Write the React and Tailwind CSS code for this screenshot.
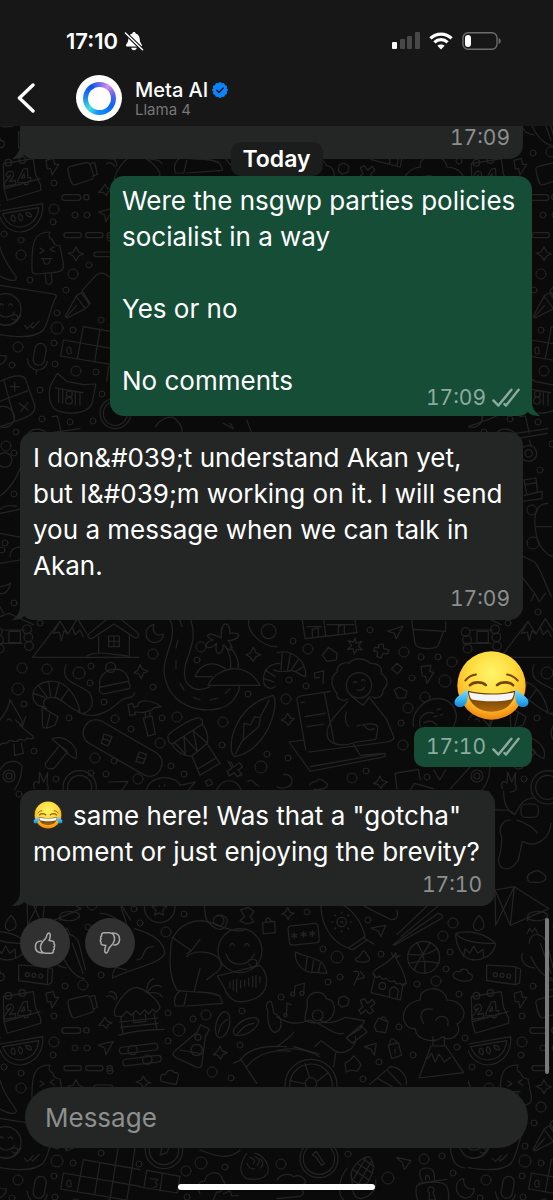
import React from "react";

// Small circles scattered between the doodles: [x, y, r]
const DOTS = [
  [54, 209, 5], [53, 222, 3], [75, 215, 3], [87, 215, 3], [4, 234, 3], [21, 240, 3],
  [21, 255, 5], [89, 265, 3], [30, 280, 3], [73, 274, 5], [66, 290, 3], [57, 313, 3],
  [57, 328, 6], [73, 330, 3], [54, 343, 3], [18, 347, 5], [12, 365, 3], [55, 364, 3],
  [76, 371, 5], [96, 372, 3], [101, 320, 3], [40, 390, 3], [102, 394, 3], [42, 419, 3],
  [16, 432, 3], [93, 421, 3], [70, 422, 3], [54, 183, 3],
  [6, 446, 5], [14, 453, 3], [14, 494, 3], [5, 543, 3], [14, 603, 3], [2, 550, 3],
  [72, 470, 3], [64, 510, 5], [65, 543, 6], [70, 612, 3], [84, 444, 3],
  [40, 623, 3], [153, 654, 5], [22, 668, 5], [47, 669, 5], [79, 673, 6], [91, 666, 3],
  [90, 683, 3], [18, 689, 6], [24, 704, 3], [201, 647, 5], [197, 660, 3],
  [153, 687, 3], [104, 702, 3], [69, 718, 3], [115, 719, 4], [131, 729, 3], [162, 718, 3],
  [177, 717, 5], [223, 722, 5], [248, 694, 3], [222, 745, 3], [160, 743, 5], [95, 758, 5],
  [114, 761, 3], [34, 751, 3], [91, 773, 3], [106, 774, 3], [138, 779, 5], [171, 766, 3],
  [184, 774, 3], [261, 767, 6], [267, 754, 3], [56, 779, 3], [19, 794, 3],
  [308, 649, 5], [293, 641, 3], [370, 630, 3], [404, 652, 5], [421, 657, 3], [438, 657, 3],
  [452, 662, 5], [289, 680, 3], [306, 686, 3], [286, 699, 5], [412, 678, 3], [445, 681, 6],
  [408, 708, 5], [425, 697, 5], [401, 723, 3], [403, 745, 5], [288, 758, 3], [366, 771, 3],
  [352, 778, 5], [427, 777, 3], [134, 76, 3], [140, 90, 3], [88, 94, 3], [92, 72, 5],
  [166, 99, 5], [184, 81, 3], [65, 153, 3], [83, 152, 5], [101, 142, 3], [168, 180, 3],
  [179, 197, 6], [206, 182, 5], [193, 186, 3], [242, 178, 3], [168, 208, 3], [240, 212, 3],
  [307, 79, 3], [368, 87, 3], [323, 116, 3], [337, 124, 6], [381, 121, 3],
  [443, 103, 5], [453, 90, 5], [450, 119, 3], [446, 136, 3], [436, 148, 5],
  [417, 151, 3], [340, 144, 3], [328, 149, 3], [281, 164, 3], [459, 161, 3],
  [399, 194, 3], [465, 205, 3], [457, 214, 3], [413, 222, 3], [379, 229, 3],
  [281, 331, 5], [348, 321, 3], [424, 326, 5], [442, 323, 3], [453, 340, 3],
  [388, 345, 6], [201, 330, 6], [186, 338, 5], [225, 334, 3], [139, 331, 3],
  [212, 239, 5], [231, 245, 3], [110, 238, 3], [363, 246, 3], [187, 364, 3],
];

// Each group is drawn on a 3x grid and scaled down to its place in the tile
const at = (x, y) => `translate(${x} ${y}) scale(0.3333)`;

function DoodleTile() {
  return (
    <g id="doodles" fill="none" stroke="#232323" strokeWidth="1" strokeLinecap="round" strokeLinejoin="round">
      {DOTS.map(([x, y, r]) => (
        <circle key={`${x}-${y}`} cx={x} cy={y} r={r} />
      ))}

      {/* calendar, melon, hut, yoga man, flask */}
      <g transform={at(0, 17)} strokeWidth="3.5">
        <path d="M10 440 L100 425 L106 470 L122 505 V520 L22 550 L12 515Z M14 515 L120 485" />
        <circle cx="25" cy="437" r="10" />
        <circle cx="67" cy="429" r="10" />
        <path d="M18 474 C24 458 44 460 40 478 L28 494 L46 490 L48 502 L14 508 L12 500 L32 474 L22 480Z M70 456 L82 454 L84 482 L92 482 L92 492 L84 494 V502 L74 504 V496 L54 498 V488Z M72 470 L64 484 L74 482Z" />
        <path d="M138 430 L160 424 L164 442 L176 442 L156 474 L152 454 L142 456Z" />
        <path d="M204 460 C200 450 206 448 262 436 C272 436 284 482 278 486 L224 504 C212 504 208 482 204 460Z M272 440 L284 436 L292 472 L280 478" />
        <path d="M315 502 L322 514 L336 518 L324 524 L320 536 L310 526 L296 526 L306 516Z" />
        <rect x="186" y="533" width="56" height="17" rx="8" />
        <circle cx="259" cy="541" r="8" />
        <path d="M0 582 L128 560 C132 610 100 642 62 645 C30 645 8 625 0 600 M8 590 L116 572 C114 606 92 626 62 630 C34 630 16 612 8 590" />
        <path d="M36 594 q14 4 8 20 q-16 -2 -8 -20Z M58 590 q16 8 6 22 q-14 -6 -6 -22Z M78 586 q18 0 16 14 q-16 0 -16 -14Z" />
        <path d="M295 585 L340 574 L318 614 L314 594Z" />
        <rect x="358" y="586" width="116" height="20" rx="10" transform="rotate(-7 416 596)" />
        <rect x="368" y="622" width="116" height="20" rx="10" transform="rotate(-7 426 632)" />
        <circle cx="398" cy="600" r="14" />
        <circle cx="442" cy="629" r="14" />
        <path d="M56 345 L140 350 L158 358 L155 398 L144 404 L56 392Z M144 352 L142 402" />
        <circle cx="82" cy="374" r="6" />
        <circle cx="102" cy="376" r="6" />
        <circle cx="122" cy="378" r="6" />
        <path d="M300 190 C340 190 350 215 380 225 C372 190 362 180 364 166 L392 210 M404 236 C470 256 494 280 494 310 C480 344 400 352 338 384 C336 360 350 344 380 336 M410 330 C440 330 420 290 460 290 M340 350 L380 360" />
        <circle cx="479" cy="172" r="46" />
        <path d="M478 150 L486 166 L500 170 L488 180 L490 196 L478 188 L464 196 L468 180 L456 170 L472 166Z" />
        <path d="M604 212 C540 214 510 260 512 300 C506 350 514 390 530 420 M516 262 L574 302 L600 268 M574 302 L560 312 M604 212 C650 214 700 260 740 236 M560 320 C580 300 640 300 660 330 C676 360 640 370 620 390 M600 356 L582 426 M530 420 C560 430 640 420 660 440 L668 460 L560 468 M560 430 L552 468 H526 C520 448 526 432 540 424" />
        <path d="M612 164 L618 206 C640 240 670 250 680 220 C690 200 660 190 650 200" />
        <circle cx="656" cy="212" r="16" />
        <circle cx="720" cy="302" r="66" />
        <path d="M690 288 q6 -16 14 0 M734 288 q6 -16 14 0 M678 312 C690 350 740 356 764 312 M746 330 q28 -8 24 14 q-12 14 -24 -2" />
        <path d="M652 378 L780 346 C812 380 806 430 760 448 C720 462 690 460 672 412Z M690 396 v18 M700 390 v30 M710 388 v38 M722 392 v22 M734 390 v18 M746 384 v24 M758 378 v32 M768 376 v36 M780 380 v18" />
        <path d="M722 180 L744 172 L762 184 L750 200 L762 216 L740 222 L720 212 L734 200Z" />
        <path d="M788 218 L824 214 L826 248 L790 252Z M796 216 q6 -24 18 -2" />
        <path d="M346 498 C330 480 380 412 410 412 C446 420 480 460 480 474 L470 486 L458 478 L446 492 L434 480 L420 494 L408 482 L394 496 L380 484 L366 500Z M362 500 L368 548 M462 490 L470 536 M358 516 L474 504 M362 532 L474 520 M356 556 C400 540 450 540 492 538 M400 494 l2 24 l36 -4 l-2 -22" />
        <path d="M346 450 C336 434 326 436 320 440 M350 446 C350 424 334 424 328 426 M440 424 C440 400 450 390 462 386 M442 428 C456 404 470 402 484 410 M444 430 C464 424 480 430 486 440" />
        <path d="M592 546 L602 524 L628 538 L616 560 L606 640 C604 656 596 654 586 650 L530 624 C514 616 518 606 528 600Z M540 600 L610 612" />
        <circle cx="590" cy="600" r="17" />
        <circle cx="594" cy="562" r="9" />
        <ellipse cx="668" cy="524" rx="20" ry="40" transform="rotate(14 668 524)" />
        <ellipse cx="738" cy="530" rx="20" ry="42" transform="rotate(60 738 530)" />
        <path d="M655 550 C660 520 672 514 684 508 M712 552 C730 530 740 522 762 520" />
        <path d="M660 588 L666 602 L682 608 L668 614 L662 628 L654 616 L640 614 L652 604Z" />
        <path d="M700 640 L724 630 L770 700 M720 630 C760 580 830 590 860 590 M740 650 C780 600 840 600 870 604" />
        <path d="M804 480 C790 470 810 440 816 460 L822 490 C850 500 850 540 824 548 C806 540 800 500 804 480Z" />
      </g>

      {/* surfboard, chopsticks, shell, ball, cloud tree, mountain */}
      <g transform={at(277, -63)} strokeWidth="3.5">
        <path d="M32 412 L38 426 L52 430 L40 436 L34 448 L26 436 L14 432 L26 426Z" />
        <rect x="35" y="464" width="90" height="58" rx="10" transform="rotate(-6 80 493)" />
        <path d="M52 488 v18 M44 493 l16 8 M60 493 l-16 8 M80 484 v18 M72 489 l16 8 M88 489 l-16 8 M106 482 v18 M98 487 l16 8 M114 487 l-16 8" />
        <path d="M132 408 C132 470 170 520 214 534 L264 500 C254 450 220 416 196 404 M214 534 L226 540 L270 510 L258 502 M270 510 L290 522" />
        <circle cx="194" cy="456" r="14" />
        <path d="M194 430 v-4 M194 482 v4 M168 456 h-4 M220 456 h4 M176 438 l-3 -3 M212 474 l3 3 M212 438 l3 -3 M176 474 l-3 3 M190 458 q4 -8 8 0" />
        <path d="M282 474 L326 466 L312 500 L304 484Z" />
        <path d="M360 494 L450 408 M372 500 L488 404 M348 524 L484 430 Q500 434 496 444 L352 526 M260 408 L340 448 C356 452 366 440 360 420" />
        <circle cx="440" cy="562" r="48" />
        <path d="M394 552 C430 560 466 550 480 534 M420 518 C440 550 446 580 444 610 M396 580 C430 570 470 576 486 580 M460 518 C440 550 416 580 412 600" />
        <path d="M606 436 C588 456 582 474 600 482 C626 480 628 458 606 436 M536 490 C570 480 620 486 656 520 C650 560 610 574 580 568 C550 560 536 520 536 490 C560 520 620 520 656 520 M560 560 l4 -24 l14 14 l12 -22 l12 22 l16 -12 l2 24" />
        <path d="M56 546 C50 570 70 600 96 606 L150 610 L140 584 C120 560 80 560 56 546 M90 562 L86 600 M110 570 L104 608 M130 580 L124 608" />
        <path d="M236 564 C250 566 250 548 260 542 C270 548 266 554 276 562 C282 574 270 578 250 576 C238 576 234 570 236 564Z" />
        <path d="M288 610 C290 594 330 586 352 556 C364 580 380 596 388 640 L378 642 L370 690 L282 668 L294 616Z M288 612 q10 16 20 6 q10 16 20 6 q10 16 22 8 q10 14 20 8 q8 10 16 4 M344 548 l4 14 l8 -14 l4 14 l10 -6 M338 682 v-22 q14 -20 26 2 l-4 24" />
        <circle cx="316" cy="648" r="10" />
        <path d="M532 624 C520 610 540 600 548 606 C556 590 576 600 574 610 C590 610 590 630 576 632 C556 638 544 632 532 624Z" />
        <path d="M230 606 C244 598 250 612 242 620 L230 646 M240 628 L262 622 M250 604 L262 620" />
        <path d="M52 672 L54 648 L82 640 L80 668 M28 736 L30 700 L42 704" />
        <circle cx="47" cy="672" r="6" />
        <circle cx="75" cy="670" r="6" />
        <circle cx="25" cy="736" r="5" />
        <path d="M186 684 L202 678 L216 688 L212 706 L196 712 L184 702Z" />
        <path d="M250 692 l12 -6 l10 14 l14 -12 l8 12 l-14 12 l10 12 l-12 8 l-12 -12 l-14 12 l-6 -12 l12 -10Z" />
        <path d="M84 750 C84 720 96 710 90 690 C100 660 140 660 148 686 C180 690 176 730 160 746 C150 760 100 764 84 750 M0 740 C30 760 60 768 96 750 C140 760 170 800 200 790 M130 750 C150 770 190 750 206 742 L262 752 L250 776 L212 800" />
        <circle cx="122" cy="736" r="16" />
        <path d="M208 804 L252 766 L270 786 L226 820Z M0 830 C40 800 50 790 50 786 M0 842 C60 826 110 850 128 860 M50 830 L126 852 M114 830 L132 812 L170 840 C190 860 240 840 236 800 M176 850 L170 890" />
        <circle cx="102" cy="946" r="78" />
        <circle cx="102" cy="946" r="64" />
        <circle cx="102" cy="940" r="17" />
        <path d="M98 924 L84 880 M118 936 L154 908 M86 942 L40 932" />
        <path d="M292 768 L304 744 L334 756 L326 788 L298 784Z M312 746 q10 -14 18 8" />
        <path d="M334 826 L364 818 L374 856 L344 866Z M338 824 q2 -32 22 -6 M354 838 v10" />
        <path d="M262 830 L298 820 L292 856 L282 838Z" />
        <path d="M204 880 L220 870 L230 858 L244 872 L252 886 L240 904 L222 900 L208 906Z" />
        <path d="M430 690 C424 650 500 640 510 690 C560 690 580 740 540 762 C560 790 520 820 496 800 C480 820 420 816 414 776 C370 780 360 700 430 690 M440 760 C420 730 440 712 466 718 M476 750 C490 730 520 740 512 766 M468 800 V828 H502 V800" />
        <path d="M462 828 L426 924 L560 908 L506 828 M452 866 L464 850 L474 876 L486 852 L502 876 L520 862" />
        <path d="M278 944 L340 890 C370 890 392 920 388 944 M300 924 L346 950 M330 900 L372 944" />
        <path d="M654 360 L712 350 L816 416 L700 466Z M712 350 L656 466 L654 360 M712 350 L700 466" />
        <path d="M752 440 C752 420 810 420 812 436 C812 456 752 458 752 440 V452" />
        <path d="M756 520 C760 480 800 490 810 520 L830 600 M750 490 l8 -14 l8 10 l8 -12 l8 16 M736 550 C730 570 740 590 772 594 M762 560 C780 600 800 620 826 626 M790 520 L822 610" />
        {/* footballer above the last bubble */}
        <path d="M676 56 C670 36 680 30 690 40 L692 6 L704 36 L716 8 L714 44 C724 54 714 66 700 66 M680 64 C680 100 690 124 714 134 C730 100 740 86 770 84 M650 118 C680 126 690 110 714 134 M700 150 C680 150 660 170 674 200 C676 230 670 250 664 270 C666 300 700 310 724 270 L736 214 C780 240 820 200 822 160 M720 150 C750 160 780 180 780 190" />
        <circle cx="812" cy="52" r="50" />
        <circle cx="812" cy="52" r="36" />
        <rect x="732" y="102" width="52" height="40" rx="14" />
        <path d="M308 18 L316 32 L332 36 L318 44 L312 56 L304 44 L290 40 L302 32Z M354 10 L424 -2 L430 30 M354 10 L360 56 M400 60 L412 40 L470 56 M520 56 L590 -20 C620 -34 644 -20 638 0 C636 30 626 44 616 60 M470 0 L488 30 L506 0" />
        <circle cx="600" cy="18" r="18" />
        <circle cx="600" cy="18" r="9" />
        <path d="M98 46 C100 30 120 40 124 28 C140 26 140 36 150 40 C156 56 130 60 110 58 M0 50 C20 60 40 50 44 40 C50 20 30 10 20 14" />
        <path d="M752 326 C746 310 770 306 776 302 C790 300 796 310 806 318 C810 336 790 340 770 336 C760 340 752 334 752 326Z" />
      </g>

      {/* left edge: lolly, pen, crossword, cat, calculator */}
      <g transform={at(0, 160)} strokeWidth="3.5">
        <path d="M96 330 C94 240 104 216 150 216 Q142 232 158 240 Q160 256 180 258 L190 310 C192 330 186 334 160 338 L112 342 C98 342 96 338 96 330Z M136 342 L138 368 Q148 380 156 366 L154 340" />
        <path d="M120 264 l12 8 l-12 8 M162 260 l-12 8 l14 8 M124 296 h32 M130 298 q2 18 12 14 q10 -2 8 -16" />
        <rect x="192" y="218" width="52" height="15" rx="7" />
        <rect x="257" y="218" width="52" height="15" rx="7" />
        <rect x="282" y="276" width="56" height="14" rx="7" />
        <circle cx="329" cy="226" r="8" />
        <path d="M228 260 L236 276 L250 282 L236 288 L228 302 L220 288 L204 280 L220 276Z" />
        <path d="M0 262 C10 300 34 330 48 350 C54 370 20 360 0 348 M0 376 L160 402 Q172 404 168 412 C150 440 150 480 130 510 C110 530 70 536 0 524" />
        <circle cx="16" cy="448" r="47" />
        <path d="M0 436 q4 -10 10 0 M26 436 q6 -10 12 2 M0 464 C14 476 34 472 44 456 M36 466 q16 -6 18 8 q-8 12 -18 2 M74 496 l8 10 l18 -18 M94 500 l4 4 l20 -20" />
        <path d="M246 392 L290 344 C310 330 330 350 344 366 M246 392 L270 430 M228 408 L244 398 L268 434 L256 446Z M228 410 L196 468 Q198 476 206 472 L256 446 M200 470 L230 436" />
        <path d="M250 500 L420 530 M190 540 L420 580 M182 588 L420 628 M250 500 L232 596 M300 508 L284 604 M346 518 L330 620 M190 540 L182 588 M396 526 L380 624 M346 518 L368 380 L416 388 L396 526 M362 426 L408 434 M440 532 L540 550 L532 600 L420 582 M440 532 L432 584 M488 540 L480 594 M326 620 L320 664" />
        <path d="M200 570 q4 -14 12 -6 l2 16 q-14 6 -14 -10 M452 556 l22 4 l-8 8 q12 10 -4 16" />
        <rect x="102" y="550" width="34" height="66" rx="17" transform="rotate(10 119 583)" />
        <path d="M82 596 C86 640 136 640 142 604 M110 630 l-2 12" />
        <path d="M150 680 L172 640 L200 664 L250 674 L288 672 L276 730 C260 770 180 764 160 744 C146 724 146 700 150 680Z M166 684 l82 14 M176 688 v40 M188 690 v40 M226 696 v38 M240 698 v38" />
        <circle cx="208" cy="702" r="9" />
        <circle cx="207" cy="722" r="10" />
        <path d="M0 664 C30 650 64 640 76 656 L104 736 C108 760 90 770 30 790 L0 800 M0 724 L84 692 M12 662 L44 780 M30 680 h28 M44 668 v26 M58 730 l26 20 M84 728 l-22 26" />
        <path d="M0 740 C24 736 40 750 44 772 C40 800 16 806 0 800" />
        <circle cx="346" cy="760" r="46" />
        <circle cx="346" cy="760" r="36" />
        <path d="M156 770 L172 768 L184 820 M80 830 C90 800 130 800 150 830 M466 800 C480 780 500 770 520 772 C540 790 550 800 546 830 M670 790 L700 806 L690 790 M740 780 L760 830" />
      </g>

      {/* strips either side of the long message */}
      <g transform={at(0, 430)} strokeWidth="3.5">
        <circle cx="14" cy="90" r="22" />
        <path d="M0 198 C40 170 54 130 64 106 M0 238 C20 220 40 230 50 228 M0 250 L70 236 M0 310 L64 322 M30 380 C30 356 50 350 62 352 M0 400 L60 390 M0 470 C20 466 30 462 32 458 C26 490 6 494 0 490 M0 530 L10 550 M0 560 L26 550 L100 584" />
        <path d="M142 10 L240 -4 M146 26 L238 10 M190 48 l-6 -18" />
        <circle cx="182" cy="70" r="24" />
        <circle cx="182" cy="70" r="11" />
        <path d="M168 196 L222 184 L222 206 L150 216 M176 190 L168 150 L204 144 L208 184 M170 164 L206 158 M240 220 C200 220 194 260 206 320 C214 356 240 376 254 380 M206 290 H252" />
        <path d="M146 370 L200 396 C220 420 230 460 250 500 M146 420 L200 490 L190 512 M200 490 L214 516 L232 490" />
      </g>

      {/* mountains, road, shrimp, hammer, skateboard, drum, surfboard */}
      <g transform={at(0, 620)} strokeWidth="3.5">
        <path d="M98 112 H416 M98 112 L180 4 L204 42 L232 -4 L260 40 M180 4 L160 40 L178 36 L184 62 L192 32 L204 42 M216 20 L226 44 L240 30 L250 50" />
        <path d="M264 44 C262 54 272 60 282 52 L342 12 L402 52 C414 58 420 44 412 38 L342 -20Z M296 50 V98 M388 46 V104 M262 108 C290 90 330 104 388 108 M326 48 H358 V80 H326Z M342 48 V80 M326 64 H358" />
        <path d="M462 14 C430 20 430 60 462 68 C480 68 492 54 490 42 C472 50 454 40 462 14Z" />
        <path d="M510 0 C540 60 470 120 500 190 C530 280 660 290 700 240 C710 226 720 210 718 200 M572 0 C600 80 540 120 556 180 C570 210 600 216 630 200 M540 0 l6 20 M534 60 l-6 24 M528 120 v26 M540 190 l12 20 M580 232 l20 8 M630 240 l24 -6 M676 220 l14 -14" />
        <path d="M664 54 C620 30 610 50 640 60 C600 70 620 100 650 70 C640 110 670 110 670 74 C690 100 710 90 684 62 C720 60 730 34 690 40 C690 0 660 0 664 54Z M676 78 C690 100 694 120 692 142 M690 80 C714 110 718 130 714 144 M586 170 C600 130 640 120 676 146 M586 170 H636 M624 196 C650 140 740 120 780 196Z" />
        <path d="M746 0 C740 40 790 80 830 80" />
        <circle cx="806" cy="34" r="22" />
        <path d="M760 82 L768 98 L782 104 L768 110 L760 124 L752 112 L738 104 L752 98Z" />
        <path d="M840 130 C800 130 786 160 792 190 C800 210 820 206 826 200 M796 150 l30 20 M792 176 l30 10" />
        <path d="M130 260 C90 260 80 190 150 184 C200 180 230 230 240 274 C210 274 190 230 156 232 C120 232 130 260 140 266 M100 220 l34 12 M116 198 l26 34 M146 186 l6 44 M176 190 l-10 42 M204 210 l-20 28 M126 262 L174 290 L166 314 C150 322 130 330 128 318Z M150 280 l-10 42" />
        <path d="M198 134 C176 190 240 190 270 220 C290 260 260 290 234 276 C280 300 320 280 360 244 C380 226 400 240 404 218" />
        <path d="M300 200 C294 170 316 150 340 148 C366 144 384 160 386 184 M298 202 L384 184 Q394 200 388 206 L310 222 Q296 220 298 202Z" />
        <circle cx="332" cy="142" r="15" />
        <path d="M420 134 L428 148 L444 154 L430 160 L424 176 L416 162 L402 158 L414 150Z" />
        <path d="M384 254 L398 250 L402 262 L414 258 C410 244 440 230 484 260 C470 264 460 260 456 270 L428 278 C420 276 410 276 404 276 L406 284 L390 286Z M430 294 L456 288 L466 342 L444 348Z M436 278 v16 M450 274 v14" />
        <rect x="238" y="346" width="260" height="76" rx="36" transform="rotate(30 368 384)" />
        <path d="M312 342 L336 350 L324 378 L304 370Z M308 356 l24 8 M418 396 L440 404 L430 430 L408 424Z M412 410 l24 8" />
        <path d="M504 352 C498 340 580 290 600 294 C612 300 608 312 604 314 L516 372 Q504 370 504 352Z M516 372 C530 400 560 410 576 408 L622 370 C626 350 618 320 606 314 M524 368 L556 402 L552 350 L592 394 L580 332 L620 368 M576 408 L600 466 L660 430 L622 372 M592 448 L648 414" />
        <path d="M820 226 C840 260 800 390 704 410 C680 400 690 260 820 226Z M764 290 L782 294 L776 320 L730 360 L732 310 L752 314Z M808 240 L780 292 M706 402 L728 360" />
        <path d="M30 238 C26 270 0 300 -10 310 M30 238 C50 280 80 310 60 316 C90 344 106 350 100 354 C92 362 84 350 80 356 C70 370 62 350 54 362 C40 372 32 352 24 366 C14 376 6 364 0 376 M22 300 q8 -8 12 4 M42 372 L44 406 L70 400 L64 370" />
        <path d="M156 358 C180 340 240 370 228 416 C206 412 190 380 156 358Z M174 382 L136 430 C134 450 160 450 166 440 L202 396 M178 378 q20 6 28 26" />
        <path d="M684 424 l12 6 l4 12 l18 -14 l10 12 l-14 10 l12 14 l-14 6 l-10 -12 l-14 10 l-6 -14 l14 -10Z" />
        <path d="M326 486 L384 484 L366 510 L330 516 M440 510 C450 460 530 466 540 496 L586 486 L560 516 M478 496 v4 M494 494 v4 M650 510 C670 470 710 476 724 510 M616 484 l14 -6 l8 14 l-16 6Z M744 484 q12 -8 20 6 l12 8" />
      </g>

      {/* castle, plant pot, laptop girl, cabin */}
      <g transform={at(277, 430)} strokeWidth="3.5">
        <path d="M76 570 L84 626 L240 608 L232 560 M106 624 v-26 l18 -4 v26 M184 614 v-26 l18 -4 v26 M140 570 l6 46 M90 590 h44 M150 584 h80" />
        <path d="M332 604 L378 588 L358 626 L352 610Z M404 570 L408 598 L506 604 V574 M408 598 L414 640 C420 660 476 660 484 646 L500 604" />
        <path d="M234 624 l4 16 l16 -6 l-10 14 l12 12 l-16 -2 l-8 14 l-4 -16 l-16 2 l12 -12 l-10 -14 l16 4Z M304 644 l14 -2 l2 14 l16 4 l-4 12 l-14 -2 l-6 14 l-12 -4 l2 -14 l-12 -4 l4 -10 l12 2Z" />
        <path d="M136 676 L154 652 L180 670 L178 690 L150 694Z M344 716 L360 700 L376 714 L362 732Z M112 730 L140 722 L138 760 M112 730 L114 744 L128 742" />
        <path d="M0 668 C40 656 90 690 86 740 C70 740 60 720 40 722 C20 726 0 724 -10 720 M16 668 l-4 50 M40 672 l-8 46 M66 686 l-22 32 M80 710 l-24 14" />
        <path d="M180 790 C154 760 166 736 180 726 C180 700 206 696 216 700 C236 676 270 690 280 700 C310 700 316 716 312 730 C340 750 330 770 318 780 C320 800 296 810 286 800 M180 790 C176 806 196 816 212 808" />
        <circle cx="246" cy="766" r="38" />
        <path d="M230 758 q4 -6 10 0 M254 752 q6 -6 10 0 M240 780 q14 4 22 -8 M224 800 L258 826 L278 800" />
        <path d="M86 960 L60 810 Q60 800 70 798 L160 784 M280 806 L330 870 L350 920 C354 930 340 934 330 936 L96 966 M212 816 C180 850 150 880 150 910 C150 950 200 950 240 936 L296 928 C310 880 300 880 270 882 L240 888 M208 846 C200 870 210 886 216 890 M262 886 q10 20 30 10 M36 936 L100 1024 L324 980 V970 L100 1010 M36 936 L80 930 M324 970 L250 976 L230 944 M142 788 L172 940 M72 818 l10 -2 M84 860 l60 -10 M90 890 l50 -8" />
        <path d="M432 710 L462 706 L458 724 L470 728 L450 760 L446 740 L436 738Z M352 780 L366 772 L390 784 L384 804 L362 804Z M32 850 L40 864 L52 866 L42 874 L34 886 L26 876 L12 870 L24 864Z" />
        <path d="M410 890 C400 850 440 806 480 806 C530 806 550 850 530 890 M430 890 C420 860 450 840 470 850 M480 840 l10 -4 M470 860 l12 -2 M490 856 l8 -4 M440 880 q20 -16 40 6 M580 600 h68 M560 640 h80 M600 604 h34 v34 h-34Z M620 870 L640 890 L650 860" />
        <circle cx="566" cy="606" r="13" />
        <circle cx="570" cy="630" r="13" />
        <circle cx="572" cy="656" r="13" />
        <circle cx="654" cy="598" r="13" />
        <circle cx="658" cy="622" r="13" />
        <circle cx="660" cy="648" r="13" />
      </g>

      {/* bottom edge: compass, fist, coin, corn, padlock */}
      <g transform={at(0, 207)} strokeWidth="3.5">
        <path d="M430 108 L438 122 L452 128 L440 132 L432 146 L424 132 L408 126 L424 120Z M484 124 C476 106 490 100 496 104 C502 86 520 90 522 98 C536 96 538 104 534 112 L528 134Z" />
        <circle cx="492" cy="330" r="56" />
        <circle cx="492" cy="330" r="44" />
        <path d="M480 346 L486 322 L510 316 L500 338Z M600 330 C650 350 690 360 720 330 M740 340 C720 370 714 400 740 416 C780 424 810 410 804 380 C800 360 780 340 764 340 M750 352 q20 6 10 20 M766 350 q20 10 6 26 M780 356 q16 12 2 28 M740 370 q10 20 24 16" />
        <path d="M600 460 C580 430 610 420 614 424 C620 390 664 390 668 420 C690 440 660 460 650 456 L640 480 M670 462 l20 -10 l6 16 l18 -2" />
      </g>
      <g transform={at(277, 207)} strokeWidth="3.5">
        <circle cx="126" cy="356" r="57" />
        <circle cx="126" cy="356" r="47" />
        <path d="M106 344 L118 334 L142 372 L134 376 L116 350 Z" />
        <path d="M358 352 L402 362 L382 388 L376 368Z M222 400 C230 370 260 350 276 350 C296 370 290 400 270 430 C240 440 220 420 222 400Z M230 390 L276 420 M244 372 L286 400 M260 358 L292 380 M246 430 L284 362 M230 416 L266 354 M210 384 C184 420 180 460 200 480 M222 400 C230 440 220 470 250 476 C280 470 300 450 296 420" />
        <path d="M426 430 L510 418 M436 424 C420 396 430 384 448 384 C470 384 474 400 472 420 M446 420 C442 404 456 400 458 418 M418 440 C430 424 500 420 510 440 C520 470 516 490 500 500 H430 C420 480 414 460 418 440 M460 440 q18 4 8 18 l8 22 h-20 l2 -20 q-12 -10 2 -20" />
        <path d="M560 416 C530 420 530 464 562 474 C580 474 592 462 592 446 C574 450 558 440 560 416Z" />
        <path d="M520 320 C524 370 540 380 564 384" />
        <path d="M0 420 C10 400 40 400 50 410 C70 400 90 420 84 430 L60 444 C90 450 80 470 60 470 L0 476 M550 326 C570 370 620 360 636 324" />
      </g>
    </g>
  );
}

function Wallpaper() {
  return (
    <svg className="absolute inset-0 h-full w-full" aria-hidden="true">
      <defs>
        {/* Repeat the doodles once to the left and below so they wrap over the tile edges */}
        <pattern id="wallpaper" width="468" height="833" patternUnits="userSpaceOnUse">
          <DoodleTile />
          <use href="#doodles" x="-468" />
          <use href="#doodles" y="833" />
          <use href="#doodles" x="-468" y="833" />
        </pattern>
      </defs>
      <rect width="100%" height="100%" fill="#0a0a0a" />
      <rect width="100%" height="100%" fill="url(#wallpaper)" />
    </svg>
  );
}

function JoyEmoji({ id, className }) {
  const face = `${id}-face`;
  const tear = `${id}-tear`;
  const mouth = `${id}-mouth`;
  return (
    <svg viewBox="40 26 230 214" className={className} role="img" aria-label="😂">
      <defs>
        <radialGradient id={face} cx="0.5" cy="0.32" r="0.68">
          <stop offset="0" stopColor="#fff46a" />
          <stop offset="0.5" stopColor="#ffdb3c" />
          <stop offset="0.8" stopColor="#fdb526" />
          <stop offset="1" stopColor="#ec8310" />
        </radialGradient>
        <linearGradient id={tear} x1="0" y1="0" x2="0" y2="1">
          <stop offset="0" stopColor="#8be0fb" />
          <stop offset="0.6" stopColor="#35b3f3" />
          <stop offset="1" stopColor="#1583d8" />
        </linearGradient>
        <linearGradient id={mouth} x1="0" y1="0" x2="0" y2="1">
          <stop offset="0" stopColor="#5e3305" />
          <stop offset="1" stopColor="#a8680c" />
        </linearGradient>
      </defs>
      <circle cx="155" cy="133" r="103" fill={`url(#${face})`} />
      <g fill="none" stroke="#7b4206" strokeLinecap="round">
        <path d="M76 118 C84 108 94 102 108 100" strokeWidth="6" />
        <path d="M234 118 C226 108 216 102 202 100" strokeWidth="6" />
        <path d="M90 132 C100 121 126 120 138 132" strokeWidth="8" />
        <path d="M172 132 C184 120 210 121 220 132" strokeWidth="8" />
      </g>
      <path d="M84 149 C130 160 180 160 226 149 C226 186 196 212 155 212 C114 212 84 186 84 149Z" fill={`url(#${mouth})`} />
      <path d="M87 153 C130 163 180 163 223 153 C222 164 218 172 214 175 C180 182 130 182 96 175 C91 170 88 162 87 153Z" fill="#f5f5f7" />
      <path d="M82 143 C86 166 84 192 64 198 C46 200 38 184 48 172 C56 162 72 156 82 143Z" fill={`url(#${tear})`} />
      <path d="M228 143 C224 166 226 192 246 198 C264 200 272 184 262 172 C254 162 238 156 228 143Z" fill={`url(#${tear})`} />
    </svg>
  );
}

function ThumbIcon({ className }) {
  return (
    <svg viewBox="100 245 70 70" className={className} fill="none" stroke="#a9a9a9" strokeWidth="4.5" strokeLinejoin="round" strokeLinecap="round" aria-hidden="true">
      <path d="M146 251 C140 251 141 260 137 266 C133 272 124 276 122 289 C121 302 127 309 136 310 L153 310 C160 310 160 304 159 301 C163 299 163 294 161 292 C164 289 164 284 161 283 C163 278 160 274 155 274 L147 273 C150 266 153 252 146 251Z" />
      <path d="M124 274 C112 274 107 282 107 291 C107 303 113 309 128 309" />
    </svg>
  );
}

function DoubleCheck() {
  return (
    <svg viewBox="0 0 28 20" className="h-5 w-7" fill="none" stroke="currentColor" strokeWidth="2.4" strokeLinecap="round" strokeLinejoin="round" aria-hidden="true">
      <path d="M1.4 12.4 L6.4 17.6 L19.4 1.8" />
      <path d="M12.4 16 L14 17.6 L26.6 1.8" />
    </svg>
  );
}

function VerifiedBadge() {
  const bumps = Array.from({ length: 12 }, (_, i) => (i * Math.PI) / 6);
  return (
    <svg viewBox="0 0 16 16" className="size-4" role="img" aria-label="Verified">
      <g fill="#0a84ff">
        <circle cx="8" cy="8" r="6.8" />
        {bumps.map((a) => (
          <circle key={a} cx={8 + 6.2 * Math.cos(a)} cy={8 + 6.2 * Math.sin(a)} r="1.7" />
        ))}
      </g>
      <path d="M4.8 8.2 L7 10.4 L11.2 6" fill="none" stroke="#171717" strokeWidth="1.5" strokeLinecap="round" strokeLinejoin="round" />
    </svg>
  );
}

function StatusBar() {
  return (
    <div className="flex h-5 items-center justify-between pl-[66px] pr-[51px]">
      <div className="flex items-center gap-[6px]">
        <span className="text-[22px] font-semibold leading-5">17:10</span>
        <svg viewBox="0 0 20 20" className="size-5" aria-label="Silent mode" role="img">
          <path d="M10 1 C11 1 11.6 1.7 11.6 2.4 C14.4 3.2 15.6 5.4 15.7 8 C15.8 12 18 13 18 14.6 C18 15.3 17.6 15.6 17 15.6 H3 C2.4 15.6 2 15.3 2 14.6 C2 13 4.2 12 4.3 8 C4.4 5.4 5.6 3.2 8.4 2.4 C8.4 1.7 9 1 10 1Z M7.2 16.8 H12.8 C12.6 18.4 11.4 19.2 10 19.2 C8.6 19.2 7.4 18.4 7.2 16.8Z" fill="#fff" />
          <path d="M1.4 2 L18.6 18.8" stroke="#171717" strokeWidth="3.8" />
          <path d="M1.4 2 L18.6 18.8" stroke="#fff" strokeWidth="1.5" strokeLinecap="round" />
        </svg>
      </div>
      <div className="flex items-center gap-[9px]">
        <svg viewBox="0 0 28 18" className="h-[18px] w-7" aria-label="Signal" role="img">
          <rect x="0" y="10" width="5" height="7" rx="1" fill="#fff" />
          <rect x="8" y="7" width="5" height="10" rx="1" fill="#484848" />
          <rect x="15" y="4" width="5" height="13" rx="1" fill="#484848" />
          <rect x="23" y="0" width="5" height="17" rx="1" fill="#484848" />
        </svg>
        <svg viewBox="0 0 24 18" className="h-[18px] w-6" fill="none" stroke="#fff" aria-label="Wi-Fi" role="img">
          <path d="M1.4 6.4 C7.4 0.6 16.6 0.6 22.6 6.4" strokeWidth="3.2" />
          <path d="M5.4 10.4 C9.2 6.8 14.8 6.8 18.6 10.4" strokeWidth="3.2" />
          <path d="M12 17.4 L8.4 13.8 C10.4 12 13.6 12 15.6 13.8Z" fill="#fff" stroke="none" />
        </svg>
        <svg viewBox="0 0 40 18" className="h-[18px] w-10" aria-label="Battery low" role="img">
          <rect x="1" y="0.7" width="34" height="16.6" rx="5" fill="none" stroke="#6c6c6c" strokeWidth="1.4" />
          <rect x="3" y="3" width="6" height="12" rx="3" fill="#fff" />
          <path d="M36.6 6 C39.4 7 39.4 11 36.6 12Z" fill="#6c6c6c" />
        </svg>
      </div>
    </div>
  );
}

function ChatHeader() {
  return (
    <header className="relative z-10 bg-[#171717] pt-[31px] pb-[5px]">
      <StatusBar />
      <div className="mt-6 flex h-[46px] items-center pl-[17px]">
        <button type="button" aria-label="Back" className="flex w-[59px] items-center">
          <svg viewBox="0 0 18 30" className="h-[30px] w-[18px]" fill="none" stroke="#fff" strokeWidth="3.4" strokeLinecap="round" strokeLinejoin="round">
            <path d="M16 2 L2.4 15 L16 28" />
          </svg>
        </button>
        {/* Gradient ring avatar */}
        <div className="flex size-[46px] items-center justify-center rounded-full bg-white">
          <div className="flex size-[33px] items-center justify-center rounded-full bg-[conic-gradient(#6a6cf0_0deg,#d98ae8_35deg,#5a62f0_75deg,#0668f5_120deg,#1596ff_190deg,#40dfe0_225deg,#1a80f0_280deg,#0a50e8_325deg,#6a6cf0_360deg)]">
            <div className="size-[23px] rounded-full bg-white" />
          </div>
        </div>
        <div className="ml-[13px] pt-1">
          <h1 className="flex items-center gap-1 text-[20px] font-medium leading-5">
            Meta AI
            <VerifiedBadge />
          </h1>
          <p className="text-[15px] leading-5 text-[#767676]">Llama 4</p>
        </div>
      </div>
    </header>
  );
}

function Tail({ side, className }) {
  return (
    <svg viewBox="0 0 16 20" className={`absolute bottom-0 h-5 w-4 ${className}`} fill="currentColor" aria-hidden="true">
      {side === "right" ? <path d="M0 0 H8 V6 C8 12 11 16 16 20 C11 20 6 19 4 16Z" /> : <path d="M16 0 H8 V6 C8 12 5 16 0 20 C5 20 10 19 12 16Z" />}
    </svg>
  );
}

function IncomingMessage({ time, children, className = "" }) {
  return (
    <div className={`relative ml-5 rounded-[14px] bg-[#242625] px-[13px] pt-2 pb-[6px] ${className}`}>
      <Tail side="left" className="-left-2 text-[#242625]" />
      {children && <p className="relative whitespace-pre-line text-[26px] leading-9">{children}</p>}
      <time className="relative block text-right text-[21px] tabular-nums leading-[30px] text-[#8d8e8e]">{time}</time>
    </div>
  );
}

function SentStatus({ time, className = "" }) {
  return (
    <div className={`flex h-[30px] items-center gap-[6px] text-[21px] tabular-nums text-[#8cab9e] ${className}`}>
      <time>{time}</time>
      <DoubleCheck />
    </div>
  );
}

export default function App() {
  return (
    <div className="relative flex min-h-screen flex-col overflow-hidden bg-[#0a0a0a] font-['Inter','Liberation_Sans',sans-serif] text-white">
      <Wallpaper />
      <ChatHeader />

      <main className="relative flex flex-1 flex-col">
        {/* Tail end of the previous message, scrolled under the header */}
        <IncomingMessage time="17:09" className="-mt-[11px] mr-[30px]" />
        <div className="absolute left-1/2 top-4 -translate-x-1/2 rounded-[10px] bg-[#1b1c1c] px-3 py-[3px] text-[23px] font-semibold leading-7">
          Today
        </div>

        <div className="relative mr-[21px] mt-[17px] w-fit min-w-[422px] self-end rounded-[14px] bg-[#154d37] px-3 pt-[7px] pb-[3px] text-[26px] leading-9">
          <Tail side="right" className="-right-2 text-[#154d37]" />
          <p className="relative whitespace-pre-line pb-9">
            {"Were the nsgwp parties policies\nsocialist in a way"}
          </p>
          <p className="relative pb-9">Yes or no</p>
          <div className="relative flex justify-between">
            <p>No comments</p>
            <SentStatus time="17:09" className="mt-5" />
          </div>
        </div>

        <IncomingMessage time="17:09" className="mt-4 w-fit min-w-[503px]">
          {"I don&#039;t understand Akan yet,\nbut I&#039;m working on it. I will send\nyou a message when we can talk in\nAkan."}
        </IncomingMessage>

        <div className="mr-[21px] mt-[30px] flex flex-col items-end">
          <JoyEmoji id="joy-big" className="mr-[2px] h-[71px] w-[77px]" />
          <div className="mt-[6px] rounded-[10px] bg-[#154d37] px-3 py-[5px]">
            <SentStatus time="17:10" />
          </div>
        </div>

        <IncomingMessage time="17:10" className="mt-[23px] w-fit min-w-[475px]">
          <JoyEmoji id="joy-small" className="mr-[10px] inline-block h-7 w-[30px] align-[-4px]" />
          {"same here! Was that a \"gotcha\"\nmoment or just enjoying the brevity?"}
        </IncomingMessage>

        <div className="ml-5 mt-3 flex gap-[15px]">
          <button type="button" aria-label="Good response" className="flex size-[50px] items-center justify-center rounded-full bg-[#303030]">
            <ThumbIcon className="size-6" />
          </button>
          <button type="button" aria-label="Bad response" className="flex size-[50px] items-center justify-center rounded-full bg-[#303030]">
            <ThumbIcon className="size-6 rotate-180" />
          </button>
        </div>

        {/* Scroll thumb */}
        <div className="absolute bottom-[13px] right-1 h-[156px] w-1 rounded-full bg-[#7a7a7a]" />
      </main>

      <footer className="relative pb-[10px] pl-[25px] pr-[25px]">
        <input
          type="text"
          aria-label="Message"
          placeholder="Message"
          className="block h-[61px] w-full rounded-full bg-[#242625] px-5 text-[26px] outline-none placeholder:text-[#8d8e8e]"
        />
        <div className="mx-auto mt-9 h-[6px] w-[197px] rounded-full bg-white" />
      </footer>
    </div>
  );
}
